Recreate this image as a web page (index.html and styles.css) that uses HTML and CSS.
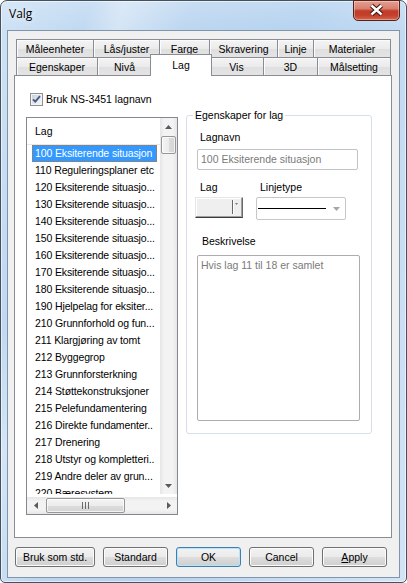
FILE: index.html
```html
<!DOCTYPE html>
<html lang="no">
<head>
<meta charset="utf-8">
<title>Valg</title>
<link rel="stylesheet" href="styles.css">
</head>
<body>
<div class="window">
  <div class="titlebar">
    <span class="title">Valg</span>
    <div class="close-btn">
      <svg width="45" height="19" viewBox="0 0 45 19">
        <path d="M17.5 4.5 L27.5 13.5 M27.5 4.5 L17.5 13.5" stroke="#3b1510" stroke-width="4.4" fill="none"/>
        <path d="M17.5 4.5 L27.5 13.5 M27.5 4.5 L17.5 13.5" stroke="#ffffff" stroke-width="2.4" fill="none"/>
      </svg>
    </div>
  </div>
  <div class="client">
    <div class="tabctl">
      <div class="tabrow row1">
        <div class="tab first">Måleenheter</div>
        <div class="tab">Lås/juster</div>
        <div class="tab">Farge</div>
        <div class="tab">Skravering</div>
        <div class="tab">Linje</div>
        <div class="tab">Materialer</div>
      </div>
      <div class="tabrow row2">
        <div class="tab first">Egenskaper</div>
        <div class="tab">Nivå</div>
        <div class="tab active">Lag</div>
        <div class="tab">Vis</div>
        <div class="tab">3D</div>
        <div class="tab">Målsetting</div>
      </div>
      <div class="panel">
        <div class="checkrow">
          <svg class="checkbox" width="13" height="13" viewBox="0 0 13 13">
            <defs>
              <linearGradient id="cbg" x1="0" y1="0" x2="1" y2="1">
                <stop offset="0" stop-color="#cdd1d7"/>
                <stop offset="1" stop-color="#f7f7f7"/>
              </linearGradient>
            </defs>
            <rect x="0.5" y="0.5" width="12" height="12" fill="#f4f4f4" stroke="#8e8f8f"/>
            <rect x="2" y="2" width="9" height="9" fill="url(#cbg)"/>
            <path d="M3 6.3 L5.3 8.7 L10 3.2" fill="none" stroke="#44598c" stroke-width="1.9"/>
          </svg>
          <span>Bruk NS-3451 lagnavn</span>
        </div>
        <div class="content">
          <div class="listbox">
            <div class="list-main">
              <div class="list-header">Lag</div>
              <div class="item selected">100 Eksiterende situasjon</div>
              <div class="item">110 Reguleringsplaner etc</div>
              <div class="item">120 Eksiterende situasjo...</div>
              <div class="item">130 Eksiterende situasjo...</div>
              <div class="item">140 Eksiterende situasjo...</div>
              <div class="item">150 Eksiterende situasjo...</div>
              <div class="item">160 Eksiterende situasjo...</div>
              <div class="item">170 Eksiterende situasjo...</div>
              <div class="item">180 Eksiterende situasjo...</div>
              <div class="item">190 Hjelpelag for eksiter...</div>
              <div class="item">210 Grunnforhold og fun...</div>
              <div class="item">211 Klargjøring av tomt</div>
              <div class="item">212 Byggegrop</div>
              <div class="item">213 Grunnforsterkning</div>
              <div class="item">214 Støttekonstruksjoner</div>
              <div class="item">215 Pelefundamentering</div>
              <div class="item">216 Direkte fundamenter..</div>
              <div class="item">217 Drenering</div>
              <div class="item">218 Utstyr og kompletteri..</div>
              <div class="item">219 Andre deler av grun...</div>
              <div class="item">220 Bæresystem</div>
            </div>
            <div class="vscroll">
              <div class="sb-btn"><svg width="7" height="4" viewBox="0 0 7 4"><path d="M0 4 L3.5 0 L7 4Z" fill="#5a5a5a"/></svg></div>
              <div class="vthumb"></div>
              <div class="vtrack"></div>
              <div class="sb-btn"><svg width="7" height="4" viewBox="0 0 7 4"><path d="M0 0 L3.5 4 L7 0Z" fill="#5a5a5a"/></svg></div>
            </div>
            <div class="hscroll">
              <div class="sb-btn"><svg width="4" height="7" viewBox="0 0 4 7"><path d="M4 0 L0 3.5 L4 7Z" fill="#5a5a5a"/></svg></div>
              <div class="hthumb">
                <svg width="7" height="7" viewBox="0 0 7 7">
                  <path d="M0.5 0 V7 M3.5 0 V7 M6.5 0 V7" stroke="#6a6a6a" stroke-width="1"/>
                </svg>
              </div>
              <div class="htrack"></div>
              <div class="sb-btn"><svg width="4" height="7" viewBox="0 0 4 7"><path d="M0 0 L4 3.5 L0 7Z" fill="#5a5a5a"/></svg></div>
            </div>
          </div>
          <fieldset class="group">
            <legend>Egenskaper for lag</legend>
            <div class="group-body">
              <div class="lbl lbl-navn">Lagnavn</div>
              <div class="textbox">100 Eksiterende situasjon</div>
              <div class="combo-row">
                <div class="combo-col col-lag">
                  <div class="lbl">Lag</div>
                  <div class="colorbox">
                    <div class="cb-swatch"></div>
                    <div class="cb-sep"></div>
                    <div class="cb-arrow"><svg width="3" height="2" viewBox="0 0 3 2"><path d="M0 0 L1.5 2 L3 0Z" fill="#7a7a7a"/></svg></div>
                  </div>
                </div>
                <div class="combo-col col-linje">
                  <div class="lbl">Linjetype</div>
                  <div class="linecombo">
                    <div class="lc-line"></div>
                    <svg class="lc-arrow" width="7" height="4" viewBox="0 0 7 4"><path d="M0 0 L3.5 4 L7 0Z" fill="#a6a6a6"/></svg>
                  </div>
                </div>
              </div>
              <div class="lbl lbl-beskr">Beskrivelse</div>
              <div class="textarea">Hvis lag 11 til 18 er samlet</div>
            </div>
          </fieldset>
        </div>
      </div>
    </div>
    <div class="buttons">
      <div class="btn wide">Bruk som std.</div>
      <div class="btn">Standard</div>
      <div class="btn default">OK</div>
      <div class="btn">Cancel</div>
      <div class="btn"><u>A</u>pply</div>
    </div>
  </div>
</div>
</body>
</html>
```

FILE: styles.css
```css
* { box-sizing: border-box; }
html, body { margin: 0; padding: 0; background: #ffffff; }
body {
  font-family: "Liberation Sans", Arial, sans-serif;
  font-size: 10.5px;
  line-height: 13px;
  color: #000;
}

.window {
  width: 407px;
  height: 583px;
  border: 1px solid #44515e;
  border-radius: 7px 7px 5px 5px;
  padding: 0 6px 4px;
  display: flex;
  flex-direction: column;
  background:
    linear-gradient(180deg, rgba(255,255,255,0.18), rgba(255,255,255,0) 30px),
    linear-gradient(105deg, #cfe2f5 0%, #c0d9f1 16%, #d4e5f6 22%, #bcd6f0 34%, #b6d3f0 55%, #c3dbf3 75%, #d2e4f6 100%);
  box-shadow: inset 0 0 0 1px rgba(255,255,255,0.55);
}

.titlebar {
  height: 29px;
  flex: none;
  display: flex;
  align-items: flex-start;
}
.title {
  font-family: "Open Sans", "Noto Sans", sans-serif;
  font-size: 12px;
  line-height: 16px;
  margin: 5px 0 0 2px;
  color: #000;
  text-shadow: 0 0 6px rgba(255,255,255,0.9);
}
.close-btn {
  margin-left: auto;
  margin-top: -1px;
  width: 47px;
  height: 21px;
  border: 1px solid #5a1f18;
  border-radius: 0 0 5px 5px;
  background: linear-gradient(180deg, #e3a092 0%, #d8806f 40%, #c23c29 52%, #c2402b 75%, #d6664b 100%);
  box-shadow: inset 0 0 0 1px rgba(255,255,255,0.35);
  display: flex;
  align-items: center;
  justify-content: center;
}
.close-btn svg { display: block; }

.client {
  flex: 1;
  border: 1px solid #8194a9;
  background: #f0f0f0;
  display: flex;
  flex-direction: column;
}

/* tab control */
.tabctl {
  margin: 8px 0 0 6px;
  width: 378px;
}
.tabrow {
  display: grid;
  height: 18px;
  margin: 0 2px;
}
.row1 { grid-template-columns: 78px 66px 50px 68px 36px 77px; }
.row2 { grid-template-columns: 82px 54px 58px 54px 54px 73px; }
.tab {
  border-top: 1px solid #898c95;
  border-right: 1px solid #898c95;
  background: linear-gradient(180deg, #f4f4f4 0%, #ebebeb 50%, #dfdfdf 52%, #e4e4e4 100%);
  box-shadow: inset 1px 1px 0 #fbfbfb;
  text-align: center;
  padding-top: 2px;
  line-height: 15px;
  white-space: nowrap;
}
.tab.first { border-left: 1px solid #898c95; }
.tab.active {
  position: relative;
  z-index: 1;
  margin: -3px -2px -1px -2px;
  border-left: 1px solid #898c95;
  background: #ffffff;
  box-shadow: none;
  padding-top: 2px;
  line-height: 16px;
}

.panel {
  height: 463px;
  border: 1px solid #898c95;
  background: #ffffff;
}

.checkrow {
  display: flex;
  align-items: center;
  gap: 3px;
  height: 13px;
  margin: 17px 0 0 15px;
}
.checkbox { display: block; flex: none; }

.content {
  display: flex;
  align-items: flex-start;
  margin: 3px 0 0 11px;
}

/* list */
.listbox {
  margin-top: 8px;
  width: 152px;
  height: 398px;
  border: 1px solid #828790;
  display: grid;
  grid-template-columns: 133px 17px;
  grid-template-rows: 376px 3px 17px;
  background: #fff;
}
.list-main {
  grid-row: 1;
  grid-column: 1;
  overflow: hidden;
}
.list-header {
  height: 27px;
  line-height: 26px;
  border-bottom: 1px solid #e8e8e8;
  padding-left: 8px;
}
.item {
  height: 17px;
  line-height: 17px;
  width: 125px;
  margin-left: 5px;
  padding-left: 3px;
  white-space: nowrap;
  overflow: hidden;
  letter-spacing: -0.12px;
}
.item.selected {
  background: #3399ff;
  color: #ffffff;
  outline: 1px dotted #c9701e;
  outline-offset: -1px;
}

.vscroll {
  grid-row: 1;
  grid-column: 2;
  display: flex;
  flex-direction: column;
  background: linear-gradient(90deg, #e6e6e6 0%, #f3f3f3 25%, #f3f3f3 75%, #e6e6e6 100%);
}
.hscroll {
  grid-row: 3;
  grid-column: 1 / 3;
  display: flex;
  background: linear-gradient(180deg, #e6e6e6 0%, #f3f3f3 25%, #f3f3f3 75%, #e6e6e6 100%);
}
.sb-btn {
  width: 17px;
  height: 17px;
  flex: none;
  display: flex;
  align-items: center;
  justify-content: center;
}
.sb-btn svg { display: block; }
.vthumb {
  flex: none;
  height: 18px;
  margin: 1px 1px 0;
  border: 1px solid #979797;
  border-radius: 2px;
  background: linear-gradient(90deg, #f4f4f4 0%, #ececec 50%, #dcdcdc 52%, #d4d4d4 100%);
  box-shadow: inset 0 0 0 1px rgba(255,255,255,0.7);
}
.vtrack { flex: 1; }
.htrack { flex: 1; }
.hthumb {
  flex: none;
  width: 79px;
  margin: 1px 0 1px 2px;
  border: 1px solid #979797;
  border-radius: 2px;
  background: linear-gradient(180deg, #f4f4f4 0%, #ececec 50%, #dcdcdc 52%, #d4d4d4 100%);
  box-shadow: inset 0 0 0 1px rgba(255,255,255,0.7);
  display: flex;
  align-items: center;
  justify-content: center;
}
.hthumb svg { display: block; }

/* group box */
.group {
  margin: 0 0 0 8px;
  padding: 0;
  width: 186px;
  min-width: 0;
  border: 1px solid #d5dfe5;
  border-radius: 3px;
}
.group legend {
  margin-left: 6px;
  padding: 0 2px;
  line-height: 12px;
  font-size: 10.5px;
}
.group-body {
  padding: 0 0 12px 10px;
}
.lbl {
  line-height: 13px;
  padding-left: 3px;
}
.lbl-navn { margin-top: 10px; }
.textbox {
  margin-top: 5px;
  width: 161px;
  height: 21px;
  border: 1px solid #bfc2c6;
  border-radius: 2px;
  background: #ffffff;
  color: #7a7a7a;
  line-height: 19px;
  padding-left: 3px;
  white-space: nowrap;
  overflow: hidden;
}
.combo-row {
  display: flex;
  margin-top: 11px;
}
.combo-col { display: flex; flex-direction: column; }
.col-lag { width: 59px; }
.col-linje .lbl { padding-left: 4px; }
.colorbox {
  margin: 3px 0 0 -2px;
  width: 48px;
  height: 21px;
  border: 1px solid;
  border-color: #e6e6e6 #696969 #3c3c3c #e6e6e6;
  background: #efefef;
  box-shadow: inset -1px -1px 0 #a0a0a0, inset 1px 1px 0 #ffffff;
  display: flex;
  align-items: flex-start;
}
.cb-swatch { width: 36px; }
.cb-sep {
  width: 1px;
  height: 14px;
  margin-top: 2px;
  background: #696969;
  box-shadow: 1px 0 0 #ffffff;
}
.cb-arrow {
  margin: 5px 0 0 2px;
  display: flex;
}
.cb-arrow svg { display: block; }
.linecombo {
  margin-top: 3px;
  width: 90px;
  height: 23px;
  border: 1px solid #c5c7cb;
  border-radius: 2px;
  background: #ffffff;
  display: flex;
  align-items: center;
}
.lc-line {
  width: 68px;
  height: 1px;
  margin-left: 1px;
  background: #000;
}
.lc-arrow { display: block; margin-left: 7px; }
.lbl-beskr { margin-top: 15px; padding-left: 5px; }
.textarea {
  margin-top: 7px;
  width: 163px;
  height: 166px;
  border: 1px solid #acacac;
  border-radius: 2px;
  background: #ffffff;
  color: #7a7a7a;
  padding: 3px 0 0 3px;
  line-height: 13px;
}

/* bottom buttons */
.buttons {
  display: flex;
  gap: 8px;
  margin: 9px 0 0 7px;
}
.btn {
  width: 65px;
  height: 20px;
  border: 1px solid #707070;
  border-radius: 3px;
  background: linear-gradient(180deg, #f2f2f2 0%, #ebebeb 50%, #dddddd 52%, #cfcfcf 100%);
  box-shadow: inset 0 0 0 1px #fcfcfc;
  text-align: center;
  line-height: 18px;
  white-space: nowrap;
}
.btn.wide { width: 80px; }
.btn.default {
  border-color: #3c7fb1;
  box-shadow: inset 0 0 0 1px #b9e3f9;
}
.btn u { text-decoration: underline; }
```
